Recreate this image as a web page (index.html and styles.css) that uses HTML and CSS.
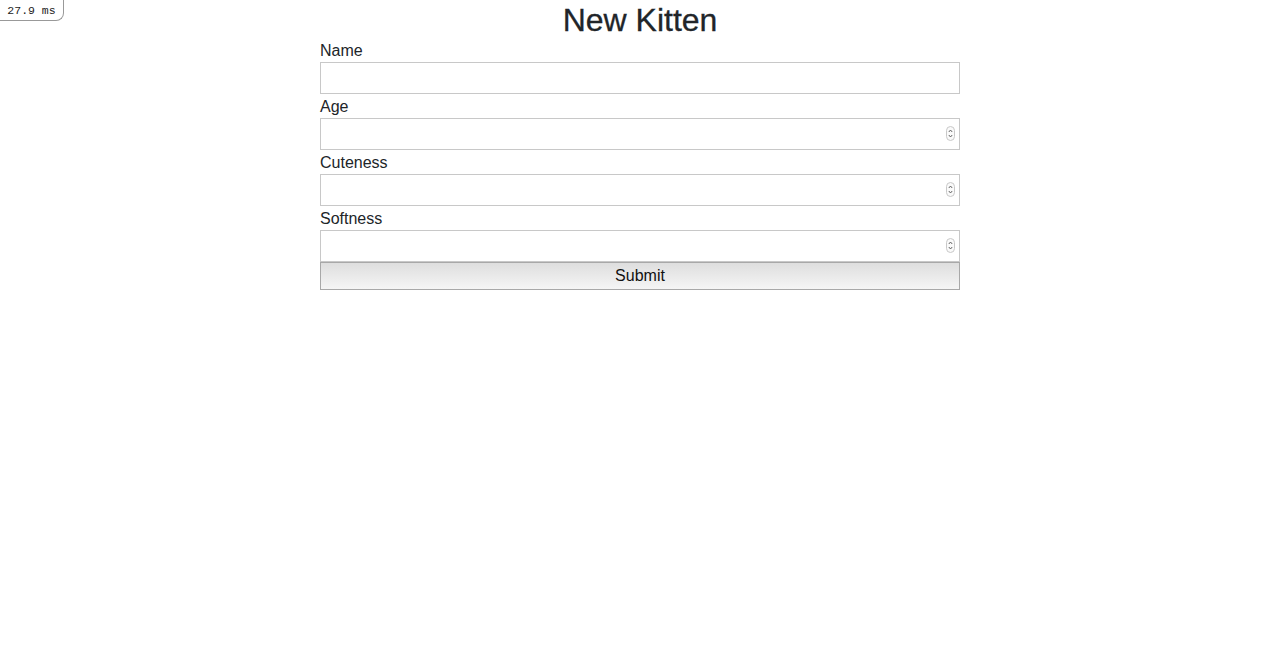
FILE: index.html
```html
<!DOCTYPE html>
<html>
<head>
<meta charset="utf-8">
<link rel="stylesheet" href="styles.css">
</head>
<body>
<div class="timer">27.9 ms</div>
<h1 class="title">New Kitten</h1>
<form class="form">
  <label class="label" for="name">Name</label>
  <div class="field"><input class="input" id="name" type="text"></div>
  <label class="label" for="age">Age</label>
  <div class="field"><input class="input" id="age" type="text">
    <svg class="spin" width="9" height="15" viewBox="0 0 9 15"><rect x="0.5" y="0.5" width="8" height="14" rx="4" fill="#fafafa" stroke="#c8c8c8"/><path d="M2.8 6 L4.5 4 L6.2 6" fill="none" stroke="#555" stroke-width="0.9"/><path d="M2.8 9 L4.5 11 L6.2 9" fill="none" stroke="#555" stroke-width="0.9"/></svg>
  </div>
  <label class="label" for="cute">Cuteness</label>
  <div class="field"><input class="input" id="cute" type="text">
    <svg class="spin" width="9" height="15" viewBox="0 0 9 15"><rect x="0.5" y="0.5" width="8" height="14" rx="4" fill="#fafafa" stroke="#c8c8c8"/><path d="M2.8 6 L4.5 4 L6.2 6" fill="none" stroke="#555" stroke-width="0.9"/><path d="M2.8 9 L4.5 11 L6.2 9" fill="none" stroke="#555" stroke-width="0.9"/></svg>
  </div>
  <label class="label" for="soft">Softness</label>
  <div class="field"><input class="input" id="soft" type="text">
    <svg class="spin" width="9" height="15" viewBox="0 0 9 15"><rect x="0.5" y="0.5" width="8" height="14" rx="4" fill="#fafafa" stroke="#c8c8c8"/><path d="M2.8 6 L4.5 4 L6.2 6" fill="none" stroke="#555" stroke-width="0.9"/><path d="M2.8 9 L4.5 11 L6.2 9" fill="none" stroke="#555" stroke-width="0.9"/></svg>
  </div>
  <button class="submit" type="button">Submit</button>
</form>
</body>
</html>
```
FILE: styles.css
```css
html, body {
  margin: 0;
  padding: 0;
  background: #fff;
}
body {
  font-family: "Liberation Sans", Arial, sans-serif;
  color: #212529;
}
.timer {
  position: absolute;
  top: 0;
  left: 0;
  width: 64px;
  height: 21px;
  box-sizing: border-box;
  border: 1px solid #999;
  border-top: none;
  border-left: none;
  border-bottom-right-radius: 8px;
  background: #fff;
  font-family: "Liberation Mono", "Courier New", monospace;
  font-size: 11.5px;
  line-height: 21px;
  color: #222;
  text-align: center;
}
.title {
  margin: 0;
  padding-top: 2px;
  font-size: 32px;
  font-weight: 500;
  line-height: 36px;
  text-align: center;
  -webkit-text-stroke: 0.3px #212529;
}
.form {
  width: 640px;
  margin: 0 auto;
  display: flex;
  flex-direction: column;
}
.label {
  font-size: 16px;
  line-height: 22px;
  padding-top: 2px;
  display: block;
}
.field {
  position: relative;
  height: 32px;
}
.input {
  display: block;
  width: 100%;
  height: 32px;
  box-sizing: border-box;
  margin: 0;
  border: 1px solid #c8c8c8;
  padding: 0 8px;
  font-size: 16px;
  font-family: inherit;
  outline: none;
  background: #fff;
}
.spin {
  position: absolute;
  right: 5px;
  top: 8px;
}
.submit {
  display: block;
  width: 100%;
  height: 28px;
  margin: 0;
  box-sizing: border-box;
  border: 1px solid #a8a8a8;
  background: linear-gradient(#dedede, #f5f5f5);
  font-family: inherit;
  font-size: 16px;
  color: #111;
  padding: 0;
}
```
